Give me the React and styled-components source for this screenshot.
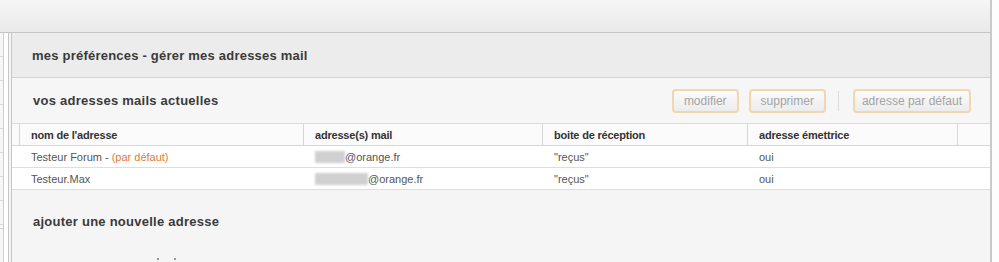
import React from "react";
import styled, { createGlobalStyle } from "styled-components";

const GlobalStyle = createGlobalStyle`
  body {
    margin: 0;
    background: #ffffff;
    font-family: "Liberation Sans", Arial, sans-serif;
  }
`;

const addresses = [
  { name: "Testeur Forum", isDefault: true, hidden: 30, box: "\"reçus\"", sender: "oui" },
  { name: "Testeur.Max", isDefault: false, hidden: 53, box: "\"reçus\"", sender: "oui" },
];

const columns = ["nom de l'adresse", "adresse(s) mail", "boite de réception", "adresse émettrice"];

const App = () => {
  return (
    <Page>
      <GlobalStyle />
      <MainColumn>
        <TopBar />
        <BodyRow>
          <Sidebar>
            {Array.from({ length: 8 }).map((_, i) => (
              <SideItem key={i} />
            ))}
            <SideBox />
          </Sidebar>
          <Gutter />
          <Panel>
            <PanelHeader>
              <PanelTitle>mes préférences - gérer mes adresses mail</PanelTitle>
            </PanelHeader>
            <SectionBar>
              <SectionTitle>vos adresses mails actuelles</SectionTitle>
              <Actions>
                <ActionButton>modifier</ActionButton>
                <ActionButton>supprimer</ActionButton>
                <Separator />
                <ActionButton $tight>adresse par défaut</ActionButton>
              </Actions>
            </SectionBar>
            <Table>
              <HeaderRow>
                <HeadCell />
                {columns.map((c) => (
                  <HeadCell key={c}>{c}</HeadCell>
                ))}
                <HeadCell $last />
              </HeaderRow>
              {addresses.map((a) => (
                <DataRow key={a.name}>
                  <Cell />
                  <Cell>
                    {a.name}
                    {a.isDefault && (
                      <>
                        {" - "}
                        <DefaultTag>(par défaut)</DefaultTag>
                      </>
                    )}
                  </Cell>
                  <Cell>
                    <Hidden style={{ width: a.hidden }} />
                    @orange.fr
                  </Cell>
                  <Cell>{a.box}</Cell>
                  <Cell>{a.sender}</Cell>
                  <Cell />
                </DataRow>
              ))}
            </Table>
            <AddSection>
              <SectionTitle>ajouter une nouvelle adresse</SectionTitle>
              <FormRow>
                <Dot />
                <Dot />
              </FormRow>
            </AddSection>
          </Panel>
        </BodyRow>
      </MainColumn>
      <RightEdge />
    </Page>
  );
};

export default App;

// STYLED CSS

const Page = styled.div`
  display: flex;
  width: 999px;
  height: 262px;
  overflow: hidden;
`;

const MainColumn = styled.div`
  display: flex;
  flex-direction: column;
  width: 990px;
`;

const RightEdge = styled.div`
  flex: 1;
  border-left: 2px solid #cacaca;
  background: #fdfdfd;
`;

const TopBar = styled.div`
  height: 32px;
  flex-shrink: 0;
  background: linear-gradient(#f6f6f6, #e9e9e9);
  border-bottom: 1px solid #c4c4c4;
`;

const BodyRow = styled.div`
  display: flex;
  flex: 1;
`;

const Sidebar = styled.div`
  width: 3px;
  background: #f7f7f7;
  border-right: 1px solid #cfcfcf;
  display: flex;
  flex-direction: column;
`;

const SideItem = styled.div`
  height: 23px;
  border-bottom: 1px solid #d8d8d8;
`;

const SideBox = styled.div`
  margin-top: 3px;
  flex: 1;
  border-top: 1px solid #cfcfcf;
`;

const Gutter = styled.div`
  width: 4px;
  background: #ffffff;
`;

const Panel = styled.div`
  flex: 1;
  display: flex;
  flex-direction: column;
  border-left: 4px double #c6c6c6;
  background: #f5f5f5;
`;

const PanelHeader = styled.div`
  height: 44px;
  display: flex;
  align-items: center;
  padding-left: 20px;
  background: #ececec;
  border-bottom: 1px solid #d2d2d2;
`;

const PanelTitle = styled.h1`
  margin: 0;
  font-size: 13px;
  font-weight: bold;
  letter-spacing: 0.22px;
  color: #3a3a3a;
`;

const SectionBar = styled.div`
  height: 45px;
  display: flex;
  align-items: center;
  justify-content: space-between;
  padding: 0 19px 0 21px;
  background: #f6f6f6;
`;

const SectionTitle = styled.h2`
  margin: 0;
  font-size: 13px;
  font-weight: bold;
  letter-spacing: 0.25px;
  color: #3a3a3a;
`;

const Actions = styled.div`
  display: flex;
  align-items: center;
  gap: 10px;
`;

const ActionButton = styled.button`
  height: 24px;
  padding: 0 ${(p) => (p.$tight ? "7px" : "10px")};
  border: 2px solid #f1d6ae;
  border-radius: 4px;
  background: linear-gradient(#fbfbfb, #ececec);
  color: #a3a3a3;
  font-family: "Liberation Sans", Arial, sans-serif;
  font-size: 12px;
`;

const Separator = styled.div`
  width: 1px;
  height: 20px;
  background: #dcdcdc;
  margin: 0 4px 0 2px;
`;

const Table = styled.div`
  display: flex;
  flex-direction: column;
  background: #ffffff;
  border-top: 1px solid #dcdcdc;
`;

const gridColumns = "8px 284px 239px 205px 210px 1fr";

const HeaderRow = styled.div`
  display: grid;
  grid-template-columns: ${gridColumns};
  height: 21px;
  border-bottom: 1px solid #d6d6d6;
  background: #fbfbfb;
`;

const HeadCell = styled.div`
  display: flex;
  align-items: center;
  padding-left: 11px;
  font-size: 11px;
  font-weight: bold;
  letter-spacing: -0.2px;
  color: #333333;
  white-space: nowrap;
  border-right: ${(p) => (p.$last ? "none" : "1px solid #d6d6d6")};
  &:first-child {
    padding-left: 0;
  }
`;

const DataRow = styled.div`
  display: grid;
  grid-template-columns: ${gridColumns};
  height: 21px;
  border-bottom: 1px solid #dedede;
`;

const Cell = styled.div`
  display: flex;
  align-items: center;
  padding-left: 11px;
  font-size: 11px;
  color: #555555;
  white-space: nowrap;
  &:first-child {
    padding-left: 0;
  }
`;

const DefaultTag = styled.span`
  color: #e07a3c;
  margin-left: 3px;
`;

const Hidden = styled.span`
  display: inline-block;
  height: 12px;
  background: #d0d0d0;
  filter: blur(1px);
`;

const AddSection = styled.div`
  display: flex;
  flex-direction: column;
  padding: 24px 21px 0;
`;

const FormRow = styled.div`
  display: flex;
  gap: 15px;
  margin: 29px 0 0 124px;
`;

const Dot = styled.span`
  width: 2px;
  height: 2px;
  border-radius: 1px;
  background: #777777;
`;
